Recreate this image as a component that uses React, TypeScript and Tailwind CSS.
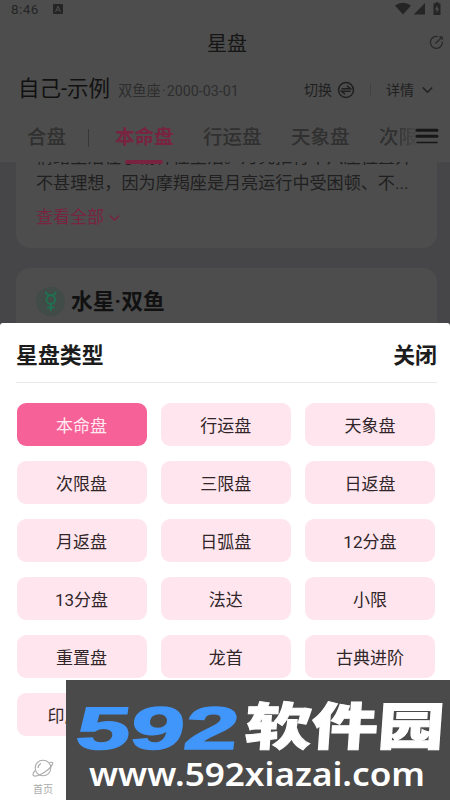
import React from "react";

const types = ["本命盘", "行运盘", "天象盘", "次限盘", "三限盘", "日返盘", "月返盘", "日弧盘", "12分盘", "13分盘", "法达", "小限", "重置盘", "龙首", "古典进阶", "印度占星"];

function StatusBar() {
  return (
    <div className="flex h-[18px] items-center pl-[11px] pr-[2px] text-[#252525]">
      <span className="w-[42px] font-['Roboto'] text-[13.5px] leading-[18px] tracking-[0.4px]">8:46</span>
      <svg width="10" height="10" viewBox="0 0 10 10"><rect width="10" height="10" rx="1" fill="#252525" /><path d="M2.5 8 5 2l2.500 6M3.500 6h3" fill="none" stroke="#4d4d4d" strokeWidth="1" /></svg>
      <span className="flex-1" />
      <svg width="53" height="14" viewBox="0 0 53 14" fill="#252525">
        <path d="M0 3.500Q8-2 16 3.500L8 12.500Z" /><path d="M30 1v11.500H18.700Z" />
        <path d="M38.500 1.500h2V.3h3v1.200h2V13h-7Z" /><path d="m42.400 3-2.500 4.500h1.600v3.500l2.600-4.500h-1.700Z" fill="#4d4d4d" />
      </svg>
    </div>
  );
}

function Header() {
  return (
    <header className="relative z-10 h-[162px] shrink-0 bg-[#4d4d4d]">
      <StatusBar />
      <div className="flex h-[50px] items-center pl-[207px] pr-[6px]">
        <h1 className="flex-1 pt-[2px] text-[20px] leading-[48px] text-[#151515]">星盘</h1>
        <svg className="-mt-[2px]" width="15" height="15" viewBox="0 0 15 15" fill="none" stroke="#292929" strokeWidth="1.300"><path d="M9 1.600A6 6 0 1 0 13.300 6.500M6.500 8.500 12.800 2.200M10.300 1.700l2.800.3.300 2.700" /></svg>
      </div>
      <div className="flex h-[42px] items-center pl-[18px] pr-[17px] pt-[1px]">
        <span className="w-[100px] whitespace-nowrap text-[21.500px] text-[#111]">自己-示例</span>
        <span className="flex flex-1 whitespace-nowrap pt-[5px] text-[14.300px] text-[#2d2d2d]">双鱼座<span className="mx-[1px]">·</span>2000-03-01</span>
        <span className="pt-[1px] text-[14px] text-[#202020]">切换</span>
        <svg className="ml-[5px]" width="18" height="18" viewBox="0 0 18 18" fill="none" stroke="#202020" strokeWidth="1.500"><circle cx="9" cy="9" r="7.500" /><path d="M4.500 7.700h9L10 4.800M13.500 10.300h-9L8 13.200" /></svg>
        <span className="ml-[15px] mr-[15px] h-[14px] w-px bg-[#424242]" />
        <span className="pt-[1px] text-[14px] text-[#202020]">详情</span>
        <svg className="ml-[8px]" width="11" height="8" viewBox="0 0 11 8" fill="none" stroke="#202020" strokeWidth="1.500"><path d="m.8 1.500 4.700 4.700 4.700-4.700" /></svg>
      </div>
      <nav className="flex h-[52px] items-center pl-[27px] pt-[4px] text-[19.500px] font-medium leading-[24px] text-[#303030]">
        <span className="w-[61px] shrink-0">合盘</span>
        <span className="mr-[26px] h-[18px] w-px shrink-0 bg-[#373737]" />
        <span className="relative w-[88px] shrink-0 font-bold text-[#782441]">本命盘<i className="absolute -bottom-[14px] left-[10px] h-[4px] w-[38px] rounded-[2px] bg-[#782441]" /></span>
        <span className="w-[88px] shrink-0">行运盘</span>
        <span className="w-[88px] shrink-0">天象盘</span>
        <span className="w-[36px] shrink-0 whitespace-nowrap">次<span className="bg-gradient-to-r from-[#343434] to-[#4b4b4b] bg-clip-text text-transparent">限</span></span>
        <svg className="-mt-[2px] shrink-0" width="24" height="18" viewBox="0 0 24 18" stroke="#171717" strokeLinecap="round"><path d="M2 2.200h20M2 8.200h20" strokeWidth="3" /><path d="M2 14.400h20" strokeWidth="1.500" /></svg>
      </nav>
    </header>
  );
}

function Reading() {
  return (
    <section className="flex h-[161px] shrink-0 flex-col overflow-hidden bg-[#464649] pl-[16px] pr-[13px]">
      <div className="flex h-[86px] shrink-0 flex-col rounded-b-[14px] bg-[#4d4d4d] pl-[20px]">
        <p className="-mt-[18px] whitespace-nowrap text-[17.100px] leading-[26px] text-[#202020]">情绪生活在乎精神性生活。月亮推行不六座位置并<br />不甚理想，因为摩羯座是月亮运行中受困顿、不...</p>
        <div className="mt-[7px] flex items-center text-[17px] leading-[28px] text-[#782441]">查看全部<svg className="ml-[5px] mt-[2px]" width="11" height="8" viewBox="0 0 11 8" fill="none" stroke="currentColor" strokeWidth="1.500"><path d="m.8 1.500 4.700 4.700 4.700-4.700" /></svg></div>
      </div>
      <div className="mt-[20px] flex h-[55px] shrink-0 items-start rounded-t-[14px] bg-[#4d4d4d] pl-[20px] pt-[19px]">
        <svg className="shrink-0" width="29" height="29" viewBox="0 0 29 29"><circle cx="14.500" cy="14.500" r="14.500" fill="#414b47" /><g fill="none" stroke="#1f7152" strokeWidth="1.900"><circle cx="14.800" cy="12.500" r="4.300" /><path d="M9.800 4.500c.5 5 9.500 5 10 0M14.800 17v7M11 20.500h7.600" /></g></svg>
        <h2 className="ml-[6px] mt-[1px] text-[21.800px] font-bold leading-[27px] text-[#111]">水星·双鱼</h2>
      </div>
    </section>
  );
}

function Watermark() {
  return (
    <div className="absolute bottom-0 left-[66px] h-[120px] w-[384px] bg-[#4a4a4a]">
      <svg width="384" height="120" viewBox="0 0 384 120" fontWeight="900">
        <g transform="translate(8 69) skewX(-8)"><text x="0" y="0" textLength="162" lengthAdjust="spacingAndGlyphs" fill="#4096fa" stroke="#4096fa" strokeWidth="1.500" strokeLinejoin="miter" fontFamily="Liberation Sans" fontSize="60">592</text></g>
        <g transform="translate(178 65) skewX(-4)"><text x="0" y="0" textLength="199" lengthAdjust="spacingAndGlyphs" fill="#fff" stroke="#fff" strokeWidth="1" fontFamily="Noto Sans CJK SC" fontSize="51">软件园</text></g>
        <text x="23" y="106" textLength="336" lengthAdjust="spacingAndGlyphs" fill="#fff" fontFamily="Noto Sans" fontWeight="600" fontSize="33">www.592xiazai.com</text>
      </svg>
    </div>
  );
}

export default function App() {
  return (
    <main className="relative flex h-[800px] w-[450px] flex-col overflow-hidden bg-[#4d4d4d] font-['Roboto','Noto_Sans_CJK_SC',sans-serif]">
      <Header />
      <Reading />
      <section className="h-[477px] shrink-0 rounded-t-[3px] bg-white">
        <div className="ml-[16px] mr-[13px] flex h-[60px] items-center justify-between border-b border-[#e9e9e9] pt-[8px] text-[21.900px] font-bold text-[#1c1c1c]"><h2>星盘类型</h2><button className="font-bold">关闭</button></div>
        <div className="ml-[16.500px] mt-[20px] grid w-[418.500px] grid-cols-3 gap-x-[14px] gap-y-[15px]">
          {types.map((t, i) => <button key={t} className={"h-[43px] rounded-[9px] pt-[4px] text-[17px] " + (i === 0 ? "bg-[#f66297] text-[#ffeaf2]" : "bg-[#ffe5ed] text-[#302529]")}>{t}</button>)}
        </div>
        <div className="ml-[32px] mt-[22px] flex w-[22px] flex-col items-center text-[#aaa]">
          <svg width="22" height="20" viewBox="0 0 22 20" fill="none" stroke="currentColor" strokeWidth="1.100"><circle cx="11" cy="10" r="7.800" /><path d="M17.500 4.500c2.500-.8 3.700 0 3 1.700C19.500 9 14 14 8.500 16.500 3 19 .2 18.500 1.200 15.500c.3-1 1-2 2-3M6 10c0-2 1-3.500 3-4.500" /></svg>
          <span className="mt-[5px] whitespace-nowrap text-[10px] leading-[14px]">首页</span>
        </div>
      </section>
      <Watermark />
    </main>
  );
}
